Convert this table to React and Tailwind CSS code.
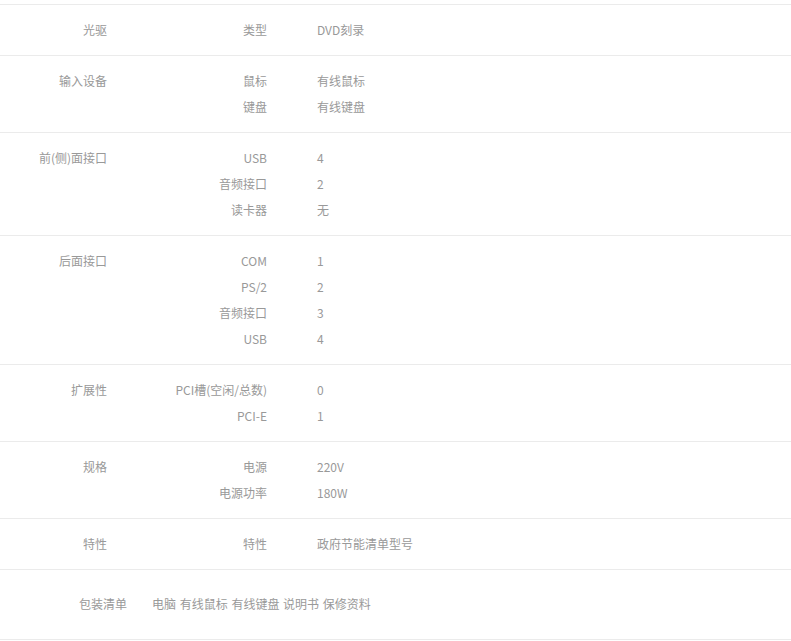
import React from 'react';

const groups = [
    { name: '光驱', items: [['类型', 'DVD刻录']] },
    { name: '输入设备', items: [['鼠标', '有线鼠标'], ['键盘', '有线键盘']] },
    { name: '前(侧)面接口', items: [['USB', '4'], ['音频接口', '2'], ['读卡器', '无']] },
    { name: '后面接口', items: [['COM', '1'], ['PS/2', '2'], ['音频接口', '3'], ['USB', '4']] },
    { name: '扩展性', items: [['PCI槽(空闲/总数)', '0'], ['PCI-E', '1']] },
    { name: '规格', items: [['电源', '220V'], ['电源功率', '180W']] },
    { name: '特性', items: [['特性', '政府节能清单型号']] },
];

const SpecRow = ({ name, items }) => (
    <div className="flex py-3 border-b border-[#ebebeb]">
        <div className="w-[107px] shrink-0 text-right leading-[26px]">{name}</div>
        <div className="flex flex-col">
            {items.map(([label, value], i) => (
                <div key={i} className="flex leading-[26px]">
                    <div className="w-[160px] shrink-0 text-right">{label}</div>
                    <div className="pl-[50px]">{value}</div>
                </div>
            ))}
        </div>
    </div>
);

const App = () => {
    return (
        <div
            className="w-[791px] bg-white text-[12px] text-[#999]"
            style={{ fontFamily: '"Noto Sans CJK SC", "Liberation Sans", sans-serif' }}
        >
            <div className="h-[5px] border-b border-[#ebebeb]"></div>
            {groups.map((g) => (
                <SpecRow key={g.name} name={g.name} items={g.items} />
            ))}
            <div className="flex pt-[21px] pb-[22px] border-b border-[#ebebeb]">
                <div className="w-[127px] shrink-0 text-right leading-[26px]">包装清单</div>
                <div className="pl-[25px] leading-[26px] [word-spacing:1px]">电脑 有线鼠标 有线键盘 说明书 保修资料</div>
            </div>
        </div>
    );
};

export default App;
